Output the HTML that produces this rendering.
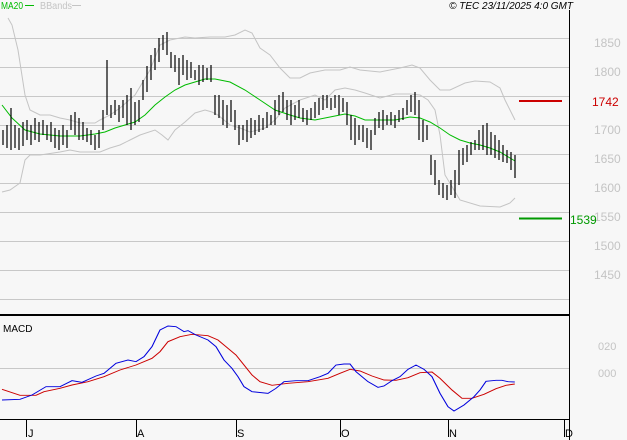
<!DOCTYPE html>
<html><head><meta charset="utf-8"><style>
html,body{margin:0;padding:0;background:#f7f7f7;}
svg{display:block;font-family:"Liberation Sans",sans-serif;}
</style></head><body>
<svg width="627" height="440" viewBox="0 0 627 440" xmlns="http://www.w3.org/2000/svg">
<rect width="627" height="440" fill="#f7f7f7"/>
<g stroke="#c8c8c8" stroke-width="1">
<line x1="0" y1="38.5" x2="569" y2="38.5"/><line x1="0" y1="67.5" x2="569" y2="67.5"/><line x1="0" y1="96.5" x2="569" y2="96.5"/><line x1="0" y1="125.5" x2="569" y2="125.5"/><line x1="0" y1="154.5" x2="569" y2="154.5"/><line x1="0" y1="183.5" x2="569" y2="183.5"/><line x1="0" y1="212.5" x2="569" y2="212.5"/><line x1="0" y1="241.5" x2="569" y2="241.5"/><line x1="0" y1="270.5" x2="569" y2="270.5"/><line x1="0" y1="299.5" x2="569" y2="299.5"/>
<line x1="0" y1="368.5" x2="569" y2="368.5"/>
</g>
<g fill="#c4c4c4" font-size="12">
<text x="594" y="47">1850</text><text x="594" y="76">1800</text><text x="594" y="134">1700</text><text x="594" y="163">1650</text><text x="594" y="192">1600</text><text x="594" y="221">1550</text><text x="594" y="250">1500</text><text x="594" y="279">1450</text>
<text x="598" y="350" font-size="11">020</text><text x="598" y="377" font-size="11">000</text>
</g>
<text x="592" y="106" fill="#cc0000" font-size="12">1742</text>
<text x="570" y="224" fill="#009900" font-size="12">1539</text>
<line x1="519" y1="101" x2="562" y2="101" stroke="#cc0000" stroke-width="2"/>
<line x1="519" y1="218.5" x2="562" y2="218.5" stroke="#009900" stroke-width="2"/>
<g fill="none" stroke="#c4c4c4" stroke-width="1">
<polyline points="8,18 12,25 18,50 25,95 30,110 40,115 50,115 60,118 70,120 80,123 95,123 100,120 110,115 120,108 135,95 150,70 160,45 170,40 185,37 195,38 210,37 225,37 235,35 245,30 252,33 260,48 270,55 280,68 290,78 300,78 310,73 325,70 340,70 350,67 360,70 380,72 400,68 412,65 420,68 430,80 440,90 450,90 465,83 475,81 490,82 500,88 505,100 515,120"/>
<polyline points="2,192 10,190 20,183 25,160 30,155 40,155 60,152 70,150 80,152 90,152 100,152 110,148 120,145 130,140 140,135 155,130 162,135 168,140 175,130 185,122 195,113 205,110 212,112 218,115 230,125 240,128 250,132 258,130 265,128 275,120 285,108 300,100 315,95 325,100 335,90 345,88 355,90 365,93 380,98 395,94 410,94 420,95 428,100 435,110 440,135 445,175 460,200 480,206 500,207 510,203 515,198"/>
</g>
<polyline fill="none" stroke="#00bb00" stroke-width="1" points="2,105 12,118 25,130 40,134 60,136 80,136 95,134 105,132 115,128 125,125 135,122 145,115 155,105 165,97 175,90 185,85 195,82 205,79 215,79 230,82 245,90 260,100 275,110 290,115 300,118 315,120 330,117 345,114 355,116 365,120 380,120 395,120 410,117 420,118 430,122 440,128 450,135 460,140 470,143 480,145 490,148 500,152 510,158 515,161"/>
<path fill="none" stroke="#000" stroke-width="1.2" d="M3 130V145M7 125V148M11 108V150M15 125V148M19 128V150M23 122V146M27 120V140M31 125V145M35 118V140M39 122V142M43 120V135M47 125V140M51 122V142M55 128V148M59 130V150M63 125V145M67 130V148M71 115V130M75 112V135M79 118V140M83 122V140M87 128V142M91 130V145M95 135V150M99 130V148M103 110V130M107 60V115M111 105V118M115 100V115M119 105V122M123 100V118M127 95V125M131 88V130M135 102V125M139 100V122M143 80V100M147 66V92M151 55V80M155 48V70M159 38V62M163 35V50M167 32V55M171 52V68M175 55V72M179 58V85M183 55V75M187 60V80M191 62V78M195 70V80M199 65V85M203 65V82M207 68V80M211 65V82M215 95V115M219 95V118M223 100V125M227 105V128M231 100V122M235 110V130M239 125V145M243 125V140M247 120V142M251 118V138M255 120V135M259 115V132M263 118V130M267 112V128M271 115V125M275 100V125M279 95V115M283 92V112M287 100V120M291 100V125M295 105V120M299 100V118M303 108V122M307 110V125M311 108V120M315 102V118M319 98V115M323 95V110M327 95V108M331 98V110M335 95V108M339 95V115M343 98V112M347 102V125M351 115V140M355 118V145M359 125V140M363 125V142M367 128V148M371 130V150M375 118V135M379 112V128M383 110V130M387 115V125M391 112V125M395 115V128M399 110V122M403 108V120M407 100V115M411 95V112M415 92V115M419 100V140M423 120V142M427 125V140M431 155V175M435 160V185M439 180V195M443 183V198M447 185V200M451 180V195M455 170V198M459 150V185M463 148V165M467 145V162M471 142V155M475 140V150M479 130V150M483 125V150M487 123V155M491 132V155M495 135V158M499 140V160M503 145V162M507 150V163M511 152V170M515 155V178"/>
<g transform="translate(0,310) scale(0.4,0.33333)" fill="none" stroke-width="2.8">
<polyline stroke="#cc0000" points="5,238 50,256 90,256 110,245 150,235 180,225 220,215 260,200 300,180 340,165 380,145 400,125 420,95 450,80 480,73 520,77 545,90 565,110 590,135 610,165 630,195 650,215 680,226 720,220 770,215 820,205 850,190 875,178 900,183 930,198 960,210 990,211 1020,203 1050,188 1080,186 1100,205 1130,240 1155,265 1180,265 1210,253 1240,236 1265,226 1287,222"/>
<polyline stroke="#0000dd" points="5,270 50,268 80,255 115,230 150,230 180,212 205,217 240,198 260,190 290,160 320,150 340,155 360,140 380,110 400,60 420,48 440,50 460,65 470,62 490,75 520,90 540,110 560,150 580,175 595,200 610,230 630,245 670,250 690,235 710,215 740,212 770,212 800,200 820,190 840,165 860,162 875,162 890,185 920,215 945,232 960,228 980,212 1000,200 1020,178 1040,165 1060,178 1080,200 1100,250 1120,290 1135,303 1160,285 1185,260 1200,240 1215,214 1240,211 1255,211 1270,215 1287,216"/>
</g>
<line x1="569.5" y1="10" x2="569.5" y2="440" stroke="#000" stroke-width="1"/>
<line x1="0" y1="315" x2="569" y2="315" stroke="#000" stroke-width="2"/>
<line x1="0" y1="419.5" x2="569" y2="419.5" stroke="#000" stroke-width="1"/>
<g stroke="#000" stroke-width="1">
<line x1="26.5" y1="419" x2="26.5" y2="437"/><line x1="136.5" y1="419" x2="136.5" y2="437"/><line x1="236.5" y1="419" x2="236.5" y2="437"/><line x1="340.5" y1="419" x2="340.5" y2="437"/><line x1="448.5" y1="419" x2="448.5" y2="437"/><line x1="564.5" y1="419" x2="564.5" y2="437"/>
</g>
<g font-size="11" fill="#000">
<text x="28" y="437">J</text><text x="137" y="437">A</text><text x="237" y="437">S</text><text x="341" y="437">O</text><text x="449" y="437">N</text><text x="565" y="437">D</text>
<text x="3" y="332" font-size="10">MACD</text>
</g>
<text x="1" y="9" font-size="10" fill="#00bb00" textLength="22" lengthAdjust="spacingAndGlyphs">MA20</text>
<line x1="25" y1="5.5" x2="34" y2="5.5" stroke="#00bb00" stroke-width="1"/>
<text x="40" y="9" font-size="10" fill="#c4c4c4" textLength="32" lengthAdjust="spacingAndGlyphs">BBands</text>
<line x1="72" y1="5.5" x2="81" y2="5.5" stroke="#c4c4c4" stroke-width="1"/>
<text x="573" y="9" font-size="10" fill="#000" font-style="italic" text-anchor="end">© TEC 23/11/2025 4:0 GMT</text>
</svg>
</body></html>
